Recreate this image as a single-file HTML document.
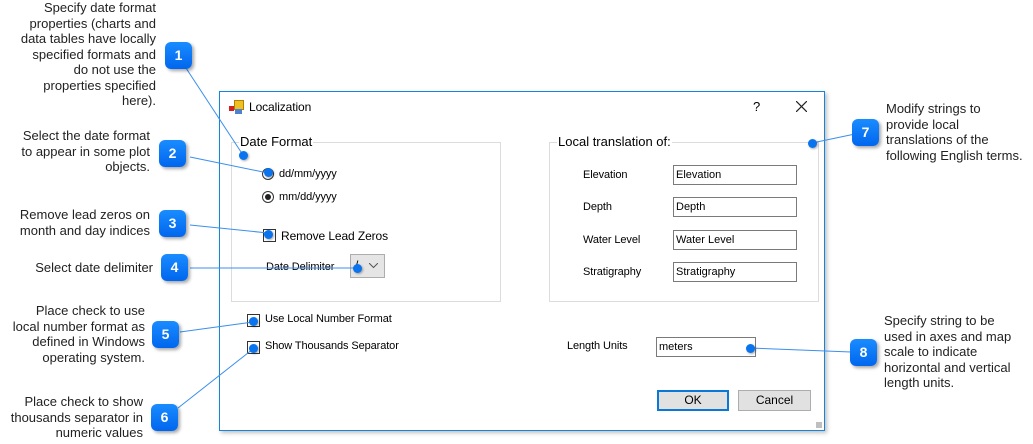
<!DOCTYPE html>
<html><head><meta charset="utf-8"><style>
body{margin:0;width:1033px;height:444px;background:#fff;position:relative;overflow:hidden;font-family:"Liberation Sans",Arial,sans-serif;}
.n{position:absolute;font-size:13px;line-height:15.5px;color:#222;}
.r{text-align:right}
.m{position:absolute;width:27px;height:27px;border-radius:6px;background:linear-gradient(#1a8cff,#0066ee);color:#fff;font-weight:bold;font-size:14px;text-align:center;line-height:27px;box-shadow:2px 2px 3px rgba(0,0,0,.35);}
.d{position:absolute;left:219px;top:91px;width:604px;height:338px;border:1px solid #1883d7;background:#fff;box-shadow:2px 2px 4px rgba(0,0,0,.25);}
.t{position:absolute;font-size:11px;color:#000;letter-spacing:-0.1px}
.gb{position:absolute;border:1px solid #dcdcdc;}
.gl{position:absolute;background:#fff;font-size:13px;padding:0 1px;top:-9px;left:7px}
.tb{position:absolute;width:120px;height:18px;border:1px solid #7a7a7a;font-size:11px;line-height:18px;padding-left:2px;box-sizing:content-box;}
.btn{position:absolute;height:19px;background:#e1e1e1;border:1px solid #adadad;font-size:12px;text-align:center;line-height:19px;}
.dot{position:absolute;width:9px;height:9px;border-radius:50%;background:#0a74ee;box-shadow:1px 1px 2px rgba(0,0,0,.35)}
</style></head><body>
<div class="n r" style="left:0;width:156px;top:0">Specify date format<br>properties (charts and<br>data tables have locally<br>specified formats and<br>do not use the<br>properties specified<br>here).</div>
<div class="n r" style="left:0;width:150px;top:128px">Select the date format<br>to appear in some plot<br>objects.</div>
<div class="n r" style="left:0;width:150px;top:207px">Remove lead zeros on<br>month and day indices</div>
<div class="n r" style="left:0;width:153px;top:260px">Select date delimiter</div>
<div class="n r" style="left:0;width:145px;top:303px">Place check to use<br>local number format as<br>defined in Windows<br>operating system.</div>
<div class="n r" style="left:0;width:143px;top:394px">Place check to show<br>thousands separator in<br>numeric values</div>
<div class="n" style="left:886px;top:101px">Modify strings to<br>provide local<br>translations of the<br>following English terms.</div>
<div class="n" style="left:884px;top:313px">Specify string to be<br>used in axes and map<br>scale to indicate<br>horizontal and vertical<br>length units.</div>

<div class="d">
 <div style="position:absolute;left:9px;top:8px;width:14px;height:14px"><div style="position:absolute;left:5px;top:0;width:8px;height:8px;background:#f0c020;border:1px solid #b08000"></div><div style="position:absolute;left:0;top:6px;width:5px;height:5px;background:#d02020"></div><div style="position:absolute;left:6px;top:9px;width:7px;height:5px;background:#5080d0"></div></div>
 <div class="t" style="left:29px;top:8px;font-size:12px">Localization</div>
 <div class="t" style="left:533px;top:7px;font-size:13px">?</div>
 <svg style="position:absolute;left:576px;top:9px" width="11" height="11"><path d="M0 0L11 11M11 0L0 11" stroke="#222" stroke-width="1.2"/></svg>
 <div class="gb" style="left:11px;top:50px;width:268px;height:158px"><span class="gl">Date Format</span>
  <div style="position:absolute;left:30px;top:25px;width:10px;height:10px;border:1px solid #333;border-radius:50%"></div>
  <div class="t" style="left:47px;top:25px">dd/mm/yyyy</div>
  <div style="position:absolute;left:30px;top:48px;width:10px;height:10px;border:1px solid #333;border-radius:50%"><div style="margin:2px;width:6px;height:6px;border-radius:50%;background:#222"></div></div>
  <div class="t" style="left:47px;top:48px">mm/dd/yyyy</div>
  <div style="position:absolute;left:31px;top:86px;width:11px;height:11px;border:1px solid #333"></div>
  <div class="t" style="left:49px;top:86px;font-size:12px">Remove Lead Zeros</div>
  <div class="t" style="left:34px;top:118px">Date Delimiter</div>
  <div style="position:absolute;left:118px;top:111px;width:33px;height:22px;background:#e5e5e5;border:1px solid #adadad"><span style="position:absolute;left:4px;top:3px;font-size:12px">/</span><svg style="position:absolute;left:18px;top:8px" width="9" height="6"><path d="M0 0L4.5 4.5L9 0" stroke="#555" fill="none"/></svg></div>
 </div>
 <div class="gb" style="left:329px;top:50px;width:268px;height:158px"><span class="gl">Local translation of:</span></div>
 <div class="t" style="left:363px;top:77px">Elevation</div><div class="tb" style="left:453px;top:73px">Elevation</div>
 <div class="t" style="left:363px;top:109px">Depth</div><div class="tb" style="left:453px;top:105px">Depth</div>
 <div class="t" style="left:363px;top:142px">Water Level</div><div class="tb" style="left:453px;top:138px">Water Level</div>
 <div class="t" style="left:363px;top:174px">Stratigraphy</div><div class="tb" style="left:453px;top:170px">Stratigraphy</div>
 <div style="position:absolute;left:27px;top:222px;width:11px;height:11px;border:1px solid #333"></div>
 <div class="t" style="left:45px;top:221px">Use Local Number Format</div>
 <div style="position:absolute;left:27px;top:249px;width:11px;height:11px;border:1px solid #333"></div>
 <div class="t" style="left:45px;top:248px">Show Thousands Separator</div>
 <div class="t" style="left:347px;top:248px">Length Units</div>
 <div class="tb" style="left:436px;top:245px;width:96px">meters</div>
 <div class="btn" style="left:437px;top:298px;width:68px;border:2px solid #0a78d7;height:17px;line-height:17px">OK</div>
 <div class="btn" style="left:518px;top:298px;width:71px">Cancel</div>
 <div style="position:absolute;right:2px;bottom:2px;width:6px;height:6px;background:radial-gradient(circle,#aaa 0.8px,transparent 1px) 0 0/2px 2px"></div>
</div>

<svg style="position:absolute;left:0;top:0" width="1033" height="444">
<g stroke="#3a8fee" stroke-width="1" fill="none">
<line x1="184" y1="65" x2="243" y2="155"/>
<line x1="190" y1="157" x2="268" y2="173"/>
<line x1="190" y1="225" x2="268" y2="233"/>
<line x1="190" y1="268" x2="357" y2="268"/>
<line x1="180" y1="332" x2="253" y2="322"/>
<line x1="178" y1="408" x2="253" y2="349"/>
<line x1="812" y1="143" x2="855" y2="134"/>
<line x1="750" y1="348" x2="851" y2="352"/>
</g></svg>
<div class="dot" style="left:239px;top:151px"></div>
<div class="dot" style="left:264px;top:168px"></div>
<div class="dot" style="left:264px;top:230px"></div>
<div class="dot" style="left:353px;top:264px"></div>
<div class="dot" style="left:249px;top:317px"></div>
<div class="dot" style="left:249px;top:344px"></div>
<div class="dot" style="left:808px;top:139px"></div>
<div class="dot" style="left:746px;top:344px"></div>

<div class="m" style="left:165px;top:42px">1</div>
<div class="m" style="left:159px;top:140px">2</div>
<div class="m" style="left:159px;top:210px">3</div>
<div class="m" style="left:161px;top:254px">4</div>
<div class="m" style="left:152px;top:321px">5</div>
<div class="m" style="left:151px;top:404px">6</div>
<div class="m" style="left:852px;top:119px">7</div>
<div class="m" style="left:850px;top:339px">8</div>
</body></html>
